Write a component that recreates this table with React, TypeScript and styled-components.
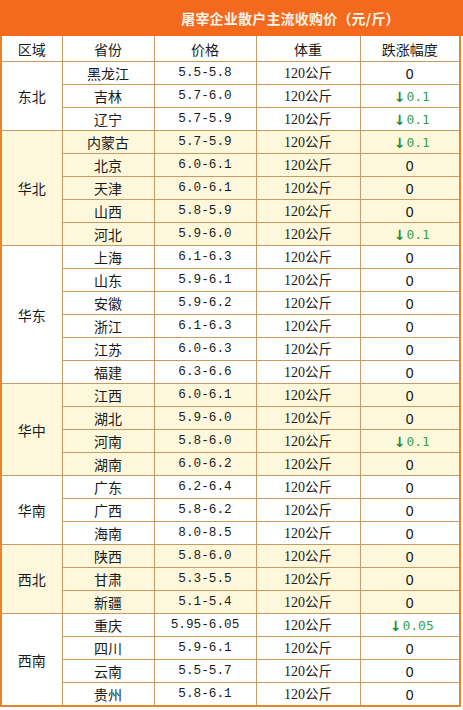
import * as React from "react";
import styled, { createGlobalStyle } from "styled-components";

const GlobalStyle = createGlobalStyle`
  html, body {
    margin: 0;
    padding: 0;
    background: #ffffff;
  }
`;

const Page = styled.div`
  width: 463px;
  font-family: "Noto Sans CJK SC", "Liberation Sans", sans-serif;
`;

const TitleBar = styled.div`
  height: 36px;
  background-color: #f36a1f;
  display: flex;
  align-items: center;
  justify-content: center;
  padding-left: 118px;
  color: #fff3e6;
  font-weight: 700;
  font-size: 14px;
  letter-spacing: 0.2px;
`;

const Table = styled.table`
  width: 461px;
  border-collapse: collapse;
  table-layout: fixed;
  border-left: 2px solid #e8852c;
  border-right: 2px solid #e8852c;
  border-bottom: 2px solid #e8852c;
`;

const HeadCell = styled.th`
  height: 25px;
  padding: 0;
  font-weight: 400;
  font-size: 14px;
  line-height: 18px;
  color: #1a1a1a;
  text-align: center;
  border: 1px solid #c99a62;
  border-top: none;
  background: #ffffff;
`;

const Row = styled.tr<{ $shade: boolean; $first: boolean }>`
  background-color: ${(p) => (p.$shade ? "#fdf8dc" : "#ffffff")};
  & > td {
    border-top: 1px solid ${(p) => (p.$first ? "#e8852c" : "#c99a62")};
  }
`;

const Cell = styled.td<{ $mono?: boolean }>`
  height: 22px;
  padding: 0;
  text-align: center;
  border-left: 1px solid #c99a62;
  border-right: 1px solid #c99a62;
  border-bottom: 1px solid #c99a62;
  font-size: ${(p) => (p.$mono ? "12.7px" : "14px")};
  font-family: ${(p) =>
    p.$mono ? '"Liberation Mono", monospace' : '"Noto Sans CJK SC", sans-serif'};
  color: #1a1a1a;
  line-height: 18px;
  white-space: nowrap;
`;

const Weight = styled.span`
  font-family: "Liberation Serif", "Noto Sans CJK SC", serif;
  font-size: 14px;
  & > em {
    font-style: normal;
    font-family: "Noto Sans CJK SC", sans-serif;
    font-size: 13.5px;
  }
`;

const Zero = styled.span`
  font-family: "Liberation Sans", sans-serif;
  font-size: 14px;
  color: #111;
`;

const Drop = styled.span`
  display: inline-flex;
  align-items: center;
  gap: 1px;
  color: #3aa24c;
  font-family: "DejaVu Sans Mono", monospace;
  font-size: 13px;
  line-height: 18px;
  padding-left: 4px;
`;

const Arrow = styled.b`
  color: #1f8a36;
  font-family: "DejaVu Sans", sans-serif;
  font-size: 14px;
  font-weight: 700;
`;

type Item = { p: string; price: string; change?: string };
type Group = { region: string; items: Item[] };

const groups: Group[] = [
  {
    region: "东北",
    items: [
      { p: "黑龙江", price: "5.5-5.8" },
      { p: "吉林", price: "5.7-6.0", change: "0.1" },
      { p: "辽宁", price: "5.7-5.9", change: "0.1" },
    ],
  },
  {
    region: "华北",
    items: [
      { p: "内蒙古", price: "5.7-5.9", change: "0.1" },
      { p: "北京", price: "6.0-6.1" },
      { p: "天津", price: "6.0-6.1" },
      { p: "山西", price: "5.8-5.9" },
      { p: "河北", price: "5.9-6.0", change: "0.1" },
    ],
  },
  {
    region: "华东",
    items: [
      { p: "上海", price: "6.1-6.3" },
      { p: "山东", price: "5.9-6.1" },
      { p: "安徽", price: "5.9-6.2" },
      { p: "浙江", price: "6.1-6.3" },
      { p: "江苏", price: "6.0-6.3" },
      { p: "福建", price: "6.3-6.6" },
    ],
  },
  {
    region: "华中",
    items: [
      { p: "江西", price: "6.0-6.1" },
      { p: "湖北", price: "5.9-6.0" },
      { p: "河南", price: "5.8-6.0", change: "0.1" },
      { p: "湖南", price: "6.0-6.2" },
    ],
  },
  {
    region: "华南",
    items: [
      { p: "广东", price: "6.2-6.4" },
      { p: "广西", price: "5.8-6.2" },
      { p: "海南", price: "8.0-8.5" },
    ],
  },
  {
    region: "西北",
    items: [
      { p: "陕西", price: "5.8-6.0" },
      { p: "甘肃", price: "5.3-5.5" },
      { p: "新疆", price: "5.1-5.4" },
    ],
  },
  {
    region: "西南",
    items: [
      { p: "重庆", price: "5.95-6.05", change: "0.05" },
      { p: "四川", price: "5.9-6.1" },
      { p: "云南", price: "5.5-5.7" },
      { p: "贵州", price: "5.8-6.1" },
    ],
  },
];

const App = () => (
  <Page>
    <GlobalStyle />
    <TitleBar>屠宰企业散户主流收购价（元/斤）</TitleBar>
    <Table>
      <colgroup>
        <col style={{ width: 61 }} />
        <col style={{ width: 92 }} />
        <col style={{ width: 102 }} />
        <col style={{ width: 104 }} />
        <col style={{ width: 100 }} />
      </colgroup>
      <thead>
        <tr>
          <HeadCell>区域</HeadCell>
          <HeadCell>省份</HeadCell>
          <HeadCell>价格</HeadCell>
          <HeadCell>体重</HeadCell>
          <HeadCell>跌涨幅度</HeadCell>
        </tr>
      </thead>
      <tbody>
        {groups.map((g, gi) =>
          g.items.map((it, i) => (
            <Row key={it.p} $shade={gi % 2 === 1} $first={i === 0}>
              {i === 0 && <Cell rowSpan={g.items.length}>{g.region}</Cell>}
              <Cell>{it.p}</Cell>
              <Cell $mono>{it.price}</Cell>
              <Cell>
                <Weight>
                  120<em>公斤</em>
                </Weight>
              </Cell>
              <Cell>
                {it.change ? (
                  <Drop>
                    <Arrow>↓</Arrow>
                    {it.change}
                  </Drop>
                ) : (
                  <Zero>0</Zero>
                )}
              </Cell>
            </Row>
          ))
        )}
      </tbody>
    </Table>
  </Page>
);

export default App;
